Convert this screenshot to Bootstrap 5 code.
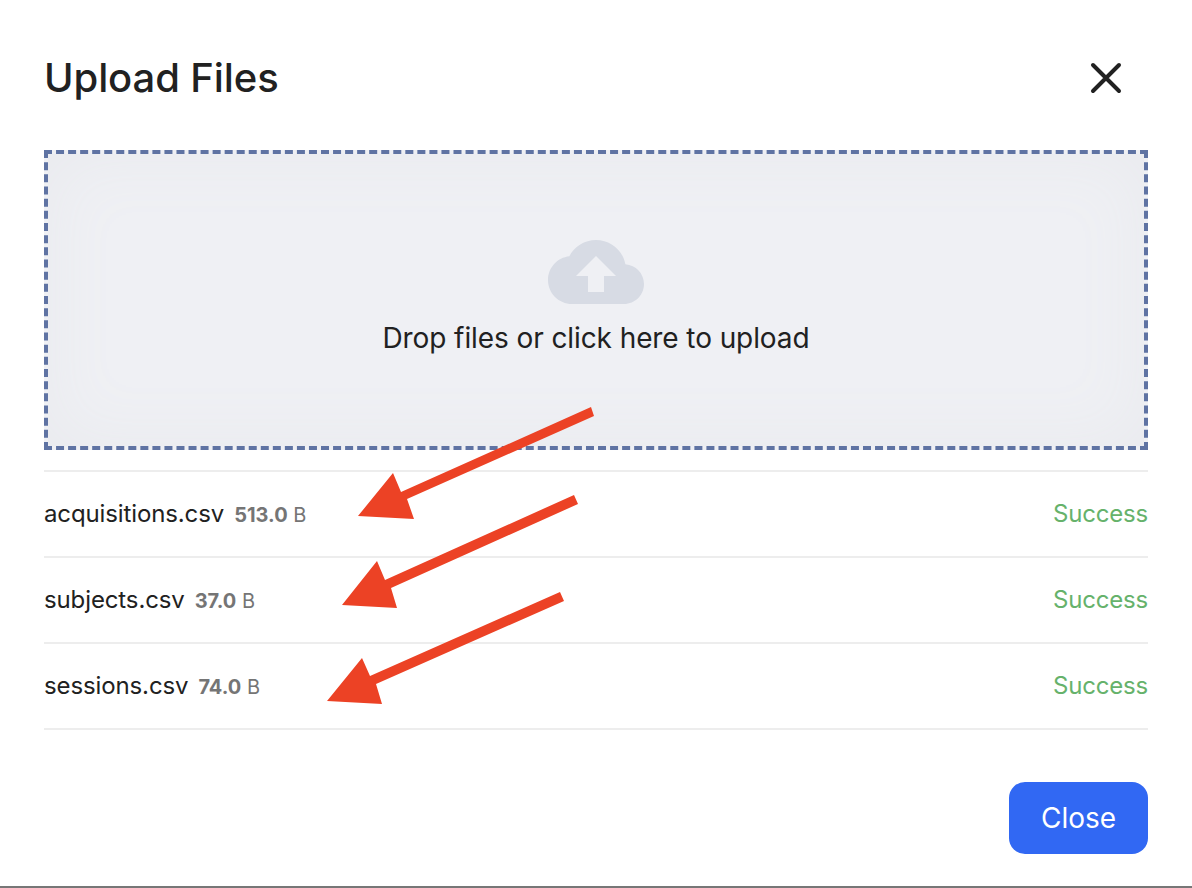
<!DOCTYPE html>
<html lang="en">
<head>
<meta charset="utf-8">
<title>Upload Files</title>
<link rel="stylesheet" href="https://cdn.jsdelivr.net/npm/bootstrap@5.3.0/dist/css/bootstrap.min.css">
<style>
html, body { height: 100%; }
body { font-family: Inter, "Liberation Sans", sans-serif; color: #212121; background: #fff; overflow: hidden; }
.sheet { position: relative; height: 888px; padding: 0 44px; border-bottom: 2px solid #777; }
.sheet-head { height: 150px; padding-top: 52px; }
.sheet-title { font-size: 40px; line-height: 52px; font-weight: 500; letter-spacing: -.1px; margin: 0; }
.x-btn { width: 32px; height: 32px; margin: 10px 26px 0 0; padding: 0; border: 0; background: none; color: #212121; }
.drop { height: 300px; border: 4px dashed #5f73a3; background: #eff0f4; box-shadow: inset 0 0 70px #e9eaee; }
.drop-icon { width: 96px; height: 96px; margin-top: 70px; display: block; }
.drop-text { font-size: 28px; line-height: 36px; letter-spacing: -.09px; margin-top: 0; }
.files { margin-top: 20px; border-top: 2px solid #ededed; }
.file-row { height: 86px; border-bottom: 2px solid #ededed; }
.file-name { font-size: 24px; letter-spacing: -.12px; }
.file-size { font-size: 20px; color: #757575; margin-left: 10px; }
.file-state { font-size: 24px; letter-spacing: -.2px; color: #66b26b; }
.foot { margin-top: 52px; }
.close-btn { width: 139px; height: 72px; border-radius: 16px; border: 0; padding: 0; background: #3168f3; color: #fff; font-size: 28px; }
.marks { position: absolute; left: 0; top: 0; pointer-events: none; }
</style>
</head>
<body>
<div class="sheet">
  <div class="sheet-head d-flex justify-content-between align-items-start">
    <h1 class="sheet-title">Upload Files</h1>
    <button class="x-btn" type="button" aria-label="Close">
      <svg width="32" height="32" viewBox="0 0 32 32" fill="none" stroke="currentColor" stroke-width="4" stroke-linecap="round"><path d="M3 3 29 29M29 3 3 29"/></svg>
    </button>
  </div>
  <div class="drop d-flex flex-column align-items-center">
    <svg class="drop-icon" viewBox="0 0 24 24" fill="#d7dbe4"><path d="M19.35 10.04C18.67 6.59 15.64 4 12 4 9.11 4 6.6 5.64 5.35 8.04 2.34 8.36 0 10.91 0 14c0 3.31 2.69 6 6 6h13c2.76 0 5-2.24 5-5 0-2.64-2.05-4.78-4.65-4.96zM14 13v4h-4v-4H7l5-5 5 5h-3z"/></svg>
    <div class="drop-text">Drop files or click here to upload</div>
  </div>
  <div class="files">
    <div class="file-row d-flex justify-content-between align-items-center">
      <div><span class="file-name">acquisitions.csv</span><span class="file-size"><strong>513.0</strong> B</span></div>
      <span class="file-state">Success</span>
    </div>
    <div class="file-row d-flex justify-content-between align-items-center">
      <div><span class="file-name">subjects.csv</span><span class="file-size"><strong>37.0</strong> B</span></div>
      <span class="file-state">Success</span>
    </div>
    <div class="file-row d-flex justify-content-between align-items-center">
      <div><span class="file-name">sessions.csv</span><span class="file-size"><strong>74.0</strong> B</span></div>
      <span class="file-state">Success</span>
    </div>
  </div>
  <div class="foot d-flex justify-content-end">
    <button class="close-btn" type="button">Close</button>
  </div>
  <svg class="marks" width="1192" height="888" viewBox="0 0 1192 888" fill="#ec4225">
    <polygon points="591,407 594,416 407,499 414,519 358,516 393,473 401,492"/>
    <polygon points="574,495 578,504 391,588 397,608 342,605 377,561 385,580"/>
    <polygon points="560,592 564,601 376,684 382,704 327,701 362,658 370,676"/>
  </svg>
</div>
<script src="https://cdn.jsdelivr.net/npm/bootstrap@5.3.0/dist/js/bootstrap.bundle.min.js"></script>
</body>
</html>
